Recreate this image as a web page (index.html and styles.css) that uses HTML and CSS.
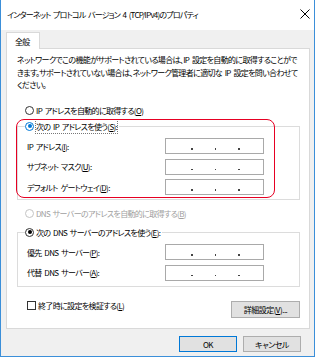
FILE: index.html
```html
<!DOCTYPE html>
<html>
<head>
    <meta charset="utf-8">
    <title>インターネット プロトコル バージョン 4 (TCP/IPv4)のプロパティ</title>
    <link rel="stylesheet" href="styles.css">
</head>
<body>

<div class="window">
    <div class="titlebar">
        <span class="title">インターネット プロトコル バージョン 4 (TCP/IPv4)のプロパティ</span>
        <svg class="close" width="10" height="10" viewBox="0 0 10 10">
            <path d="M0.5 0.5 L9.5 9.5 M9.5 0.5 L0.5 9.5" stroke="#000" stroke-width="1" fill="none"/>
        </svg>
    </div>

    <div class="client">
        <div class="tabs">
            <div class="tab">全般</div>
        </div>

        <div class="panel">
            <p class="intro">ネットワークでこの機能がサポートされている場合は、IP 設定を自動的に取得することがで<br>きます。サポートされていない場合は、ネットワーク管理者に適切な IP 設定を問い合わせて<br>ください。</p>

            <div class="option">
                <span class="radio"></span>IP アドレスを自動的に取得する(<u>O</u>)
            </div>

            <fieldset class="group">
                <legend class="option">
                    <span class="radio on focus"></span><span class="focus-text">次の IP アドレスを使う(<u>S</u>):</span>
                </legend>
                <div class="field">
                    <span>IP アドレス(<u>I</u>):</span>
                    <span class="ipbox"><i></i><i></i><i></i></span>
                </div>
                <div class="field">
                    <span>サブネット マスク(<u>U</u>):</span>
                    <span class="ipbox"><i></i><i></i><i></i></span>
                </div>
                <div class="field">
                    <span>デフォルト ゲートウェイ(<u>D</u>):</span>
                    <span class="ipbox"><i></i><i></i><i></i></span>
                </div>
            </fieldset>

            <div class="option disabled">
                <span class="radio"></span>DNS サーバーのアドレスを自動的に取得する(<u>B</u>)
            </div>

            <fieldset class="group dns">
                <legend class="option">
                    <span class="radio on"></span>次の DNS サーバーのアドレスを使う(<u>E</u>):
                </legend>
                <div class="field">
                    <span>優先 DNS サーバー(<u>P</u>):</span>
                    <span class="ipbox"><i></i><i></i><i></i></span>
                </div>
                <div class="field">
                    <span>代替 DNS サーバー(<u>A</u>):</span>
                    <span class="ipbox"><i></i><i></i><i></i></span>
                </div>
            </fieldset>

            <div class="panel-foot">
                <div class="option check-row">
                    <span class="checkbox"></span>終了時に設定を検証する(<u>L</u>)
                </div>
                <button class="btn advanced">詳細設定(<u>V</u>)...</button>
            </div>
        </div>

        <div class="buttons">
            <button class="btn default">OK</button>
            <button class="btn">キャンセル</button>
        </div>
    </div>

    <!-- annotation drawn over the dialog -->
    <div class="highlight"></div>
</div>

</body>
</html>
```

FILE: styles.css
```css
body, html {
    margin: 0;
    background: #fff;
}

body {
    font-family: "Noto Sans CJK JP", "Noto Sans", sans-serif;
    font-size: 8px;
    letter-spacing: -0.65px;
    word-spacing: 1.5px;
    font-feature-settings: "palt";
    color: #000;
}

.window {
    position: relative;
    width: 315px;
    height: 357px;
    box-sizing: border-box;
    border: 1px solid #3b8fd9;
    border-top: 0;
    background: #f0f0f0;
    display: flex;
    flex-direction: column;
}

.titlebar {
    height: 30px;
    background: #fff;
    display: flex;
    align-items: center;
    justify-content: space-between;
    padding: 0 3px 2px 6px;
    box-sizing: border-box;
}

.title {
    letter-spacing: -0.8px;
    word-spacing: 1.5px;
}

.close {
    margin-right: 1px;
}

.client {
    padding: 2px 4px 0 5px;
}

.tabs {
    display: flex;
}

.tab {
    position: relative;
    z-index: 1;
    width: 34px;
    height: 17px;
    box-sizing: border-box;
    margin-bottom: -1px;
    padding: 3px 0 0 8px;
    background: #fff;
    border: 1px solid #d9d9d9;
    border-bottom: 0;
}

.panel {
    height: 281px;
    box-sizing: border-box;
    background: #fff;
    border: 1px solid #d9d9d9;
    padding: 5px 8px 0 10px;
}

.intro {
    margin: 0;
    line-height: 12.5px;
    white-space: nowrap;
}

.option {
    display: flex;
    align-items: center;
    height: 13px;
    line-height: 13px;
    white-space: nowrap;
}

.panel > .option {
    margin-left: 8px;
    margin-top: 12px;
}

.panel > .option.disabled {
    margin-top: 6.5px;
}

.disabled {
    color: #a0a0a0;
}

.radio {
    width: 9px;
    height: 9px;
    box-sizing: border-box;
    border: 1px solid #333;
    border-radius: 50%;
    margin-right: 2px;
    position: relative;
}

.radio.on::after {
    content: "";
    position: absolute;
    left: 1.5px;
    top: 1.5px;
    width: 4px;
    height: 4px;
    border-radius: 50%;
    background: #000;
}

.radio.focus {
    border-color: #0078d7;
}

.radio.focus::after {
    background: #0078d7;
}

.disabled .radio {
    border-color: #c4c4c4;
}

.focus-text {
    outline: 1px dotted #777;
    outline-offset: 0;
}

.group {
    margin: 3px 0 0 0;
    padding: 5.5px 0 4px 9px;
    width: 283px;
    box-sizing: border-box;
    border: 1px solid #dcdcdc;
}

.group legend {
    padding: 0 2px 0 0;
    margin-left: -2px;
}

.group.dns {
    margin-top: 6px;
    padding-top: 5.5px;
    padding-bottom: 5px;
}

.field {
    display: flex;
    align-items: center;
    justify-content: space-between;
    height: 16px;
    padding-right: 35px;
    white-space: nowrap;
}

.field + .field {
    margin-top: 4.5px;
}

.ipbox {
    width: 99px;
    height: 16px;
    box-sizing: border-box;
    border: 1px solid #a9a9a9;
    background: #fff;
    display: flex;
    gap: 22px;
    padding: 9px 0 0 25px;
}

.ipbox i {
    width: 1.5px;
    height: 1.5px;
    background: #444;
}

.panel-foot {
    display: flex;
    justify-content: space-between;
    align-items: flex-start;
    margin-top: 14px;
    padding-right: 1px;
}

.check-row {
    margin-left: 10px;
    margin-top: -1.5px;
}

.checkbox {
    width: 9px;
    height: 9px;
    box-sizing: border-box;
    border: 1px solid #333;
    margin-right: 2px;
}

.btn {
    font-family: inherit;
    font-size: 8px;
    letter-spacing: -0.5px;
    font-feature-settings: "palt";
    color: #000;
    background: #e1e1e1;
    border: 1px solid #adadad;
    padding: 0;
    height: 16px;
    line-height: 13px;
}

.advanced {
    width: 69px;
    height: 17px;
}

.buttons {
    display: flex;
    justify-content: flex-end;
    gap: 6px;
    margin-top: 7px;
    padding-right: 9px;
}

.buttons .btn {
    width: 58px;
}

.btn.default {
    border-color: #0078d7;
}

.highlight {
    position: absolute;
    left: 15px;
    top: 119px;
    width: 259px;
    height: 79px;
    box-sizing: border-box;
    border: 1.5px solid #e60023;
    border-radius: 8px;
}
```
